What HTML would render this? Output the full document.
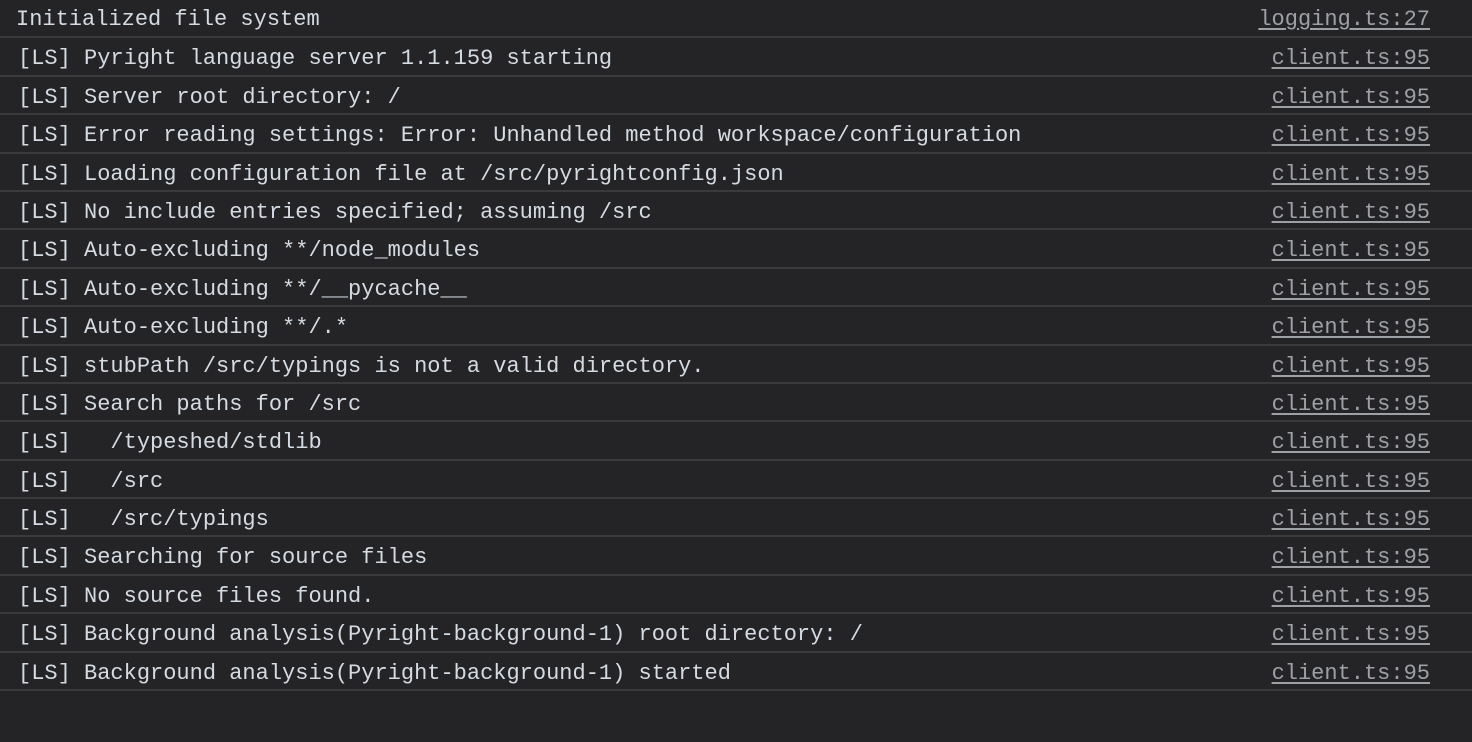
<!DOCTYPE html>
<html><head><style>
html,body{margin:0;padding:0;background:#242427;width:1472px;height:742px;overflow:hidden}
.r{position:relative;height:36.4px;border-bottom:2px solid #3a3a3d;font-family:"Liberation Mono",monospace;font-size:22px;line-height:38px;color:#d5dbe2;white-space:pre}
.r span.t{position:absolute;left:18px;top:2px}
.r span.l{position:absolute;right:42px;top:2px;color:#9da1a6;text-decoration:underline;text-underline-offset:3px}
</style></head><body>
<div class="r"><span class="t" style="left:16px;top:1px">Initialized file system</span><span class="l" style="top:1px">logging.ts:27</span></div>
<div class="r"><span class="t">[LS] Pyright language server 1.1.159 starting</span><span class="l">client.ts:95</span></div>
<div class="r"><span class="t">[LS] Server root directory: /</span><span class="l">client.ts:95</span></div>
<div class="r"><span class="t">[LS] Error reading settings: Error: Unhandled method workspace/configuration</span><span class="l">client.ts:95</span></div>
<div class="r"><span class="t">[LS] Loading configuration file at /src/pyrightconfig.json</span><span class="l">client.ts:95</span></div>
<div class="r"><span class="t">[LS] No include entries specified; assuming /src</span><span class="l">client.ts:95</span></div>
<div class="r"><span class="t">[LS] Auto-excluding **/node_modules</span><span class="l">client.ts:95</span></div>
<div class="r"><span class="t">[LS] Auto-excluding **/__pycache__</span><span class="l">client.ts:95</span></div>
<div class="r"><span class="t">[LS] Auto-excluding **/.*</span><span class="l">client.ts:95</span></div>
<div class="r"><span class="t">[LS] stubPath /src/typings is not a valid directory.</span><span class="l">client.ts:95</span></div>
<div class="r"><span class="t">[LS] Search paths for /src</span><span class="l">client.ts:95</span></div>
<div class="r"><span class="t">[LS]   /typeshed/stdlib</span><span class="l">client.ts:95</span></div>
<div class="r"><span class="t">[LS]   /src</span><span class="l">client.ts:95</span></div>
<div class="r"><span class="t">[LS]   /src/typings</span><span class="l">client.ts:95</span></div>
<div class="r"><span class="t">[LS] Searching for source files</span><span class="l">client.ts:95</span></div>
<div class="r"><span class="t">[LS] No source files found.</span><span class="l">client.ts:95</span></div>
<div class="r"><span class="t">[LS] Background analysis(Pyright-background-1) root directory: /</span><span class="l">client.ts:95</span></div>
<div class="r"><span class="t">[LS] Background analysis(Pyright-background-1) started</span><span class="l">client.ts:95</span></div>
</body></html>
